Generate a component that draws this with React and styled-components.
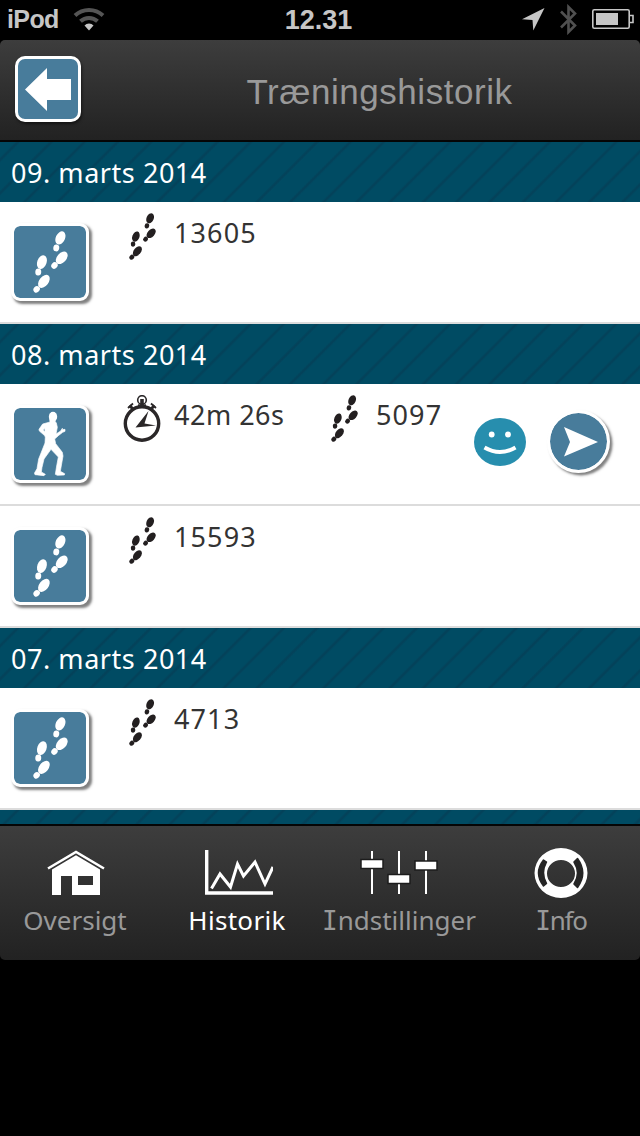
import React from 'react';
import styled, { createGlobalStyle } from 'styled-components';

const GlobalStyle = createGlobalStyle`
  * { box-sizing: border-box; }
  body {
    margin: 0;
    background: #000;
    font-family: "Noto Sans", sans-serif;
  }
  svg { display: block; }
`

const days = [
  { date: '09. marts 2014', entries: [{ type: 'steps', steps: '13605' }] },
  { date: '08. marts 2014', entries: [
    { type: 'walk', time: '42m 26s', steps: '5097', sent: true },
    { type: 'steps', steps: '15593' },
  ] },
  { date: '07. marts 2014', entries: [{ type: 'steps', steps: '4713' }] },
  { date: '', entries: [] },
];

function Footprints({ width, height }) {
  return (
    <svg width={width} height={height} viewBox="100 64 106 187" preserveAspectRatio="none" fill="currentColor">
      <ellipse cx="183" cy="85" rx="14" ry="21" transform="rotate(24 183 85)" />
      <ellipse cx="170.500" cy="115" rx="9" ry="10.500" transform="rotate(8 171 115)" />
      <ellipse cx="187" cy="145" rx="14" ry="22" transform="rotate(42 187 145)" />
      <ellipse cx="165" cy="168" rx="9" ry="10.500" transform="rotate(42 165 168)" />
      <ellipse cx="127" cy="158" rx="14" ry="21.500" transform="rotate(20 127 158)" />
      <ellipse cx="116" cy="187.500" rx="9" ry="10.500" transform="rotate(5 116 187)" />
      <ellipse cx="133" cy="216" rx="14" ry="22.500" transform="rotate(38 133 216)" />
      <ellipse cx="111" cy="240" rx="9" ry="10.500" transform="rotate(42 111 240)" />
    </svg>
  );
}

function Walker() {
  return (
    <svg width="32" height="66" viewBox="104 94 96 198" fill="#fff">
      <ellipse cx="161" cy="111" rx="12.500" ry="15" />
      <path d="M151 119L152 127L130 133L119 149L120 154L135 167L138 172L137 190L118 238L113 267L105 281L107 285L134 288L138 284L126 277L128 263L134 238L155 209L177 232L172 259L168 284L174 287L195 286L196 282L183 275L191 229L189 218L169 192L166 178L177 168L190 158L197 155L197 149L190 150L189 146L184 154L170 163L174 143L171 130L166 123ZM136 146L137 157L131 151Z" stroke="#fff" strokeWidth="2" strokeLinejoin="round" />
    </svg>
  );
}

function Stopwatch() {
  return (
    <svg width="38" height="48" viewBox="0 0 38 48" fill="none" stroke="#2a2728">
      <circle cx="19" cy="28.500" r="16.700" strokeWidth="3.400" />
      <circle cx="19" cy="5" r="4.300" strokeWidth="1.600" />
      <path d="M19 4V13" strokeWidth="3.600" />
      <path d="M15 10.500H23" strokeWidth="2.400" />
      <path d="M6.500 10.500L11 15M31.500 10.500L27 15" strokeWidth="3" />
      <path d="M5 13L10 8.500M33 13L28 8.500" strokeWidth="1.800" />
      <path d="M12.500 32.500L25.500 16L21.500 28.500L33 30.500Z" fill="#2a2728" stroke="none" />
    </svg>
  );
}

function StatusBar() {
  return (
    <Status>
      <Carrier>
        iPod
        <svg width="32" height="24" viewBox="0 0 32 24" fill="none" stroke="#555" strokeWidth="4">
          <path d="M2 8.500A20.500 20.500 0 0 1 30 8.500" />
          <path d="M7.500 14.300A12.500 12.500 0 0 1 24.500 14.300" />
          <path d="M16 23.500L11.500 18.600A6 6 0 0 1 20.500 18.600Z" fill="#c6c6c6" stroke="none" />
        </svg>
      </Carrier>
      <Clock>12.31</Clock>
      <Indicators>
        <svg width="23" height="23" viewBox="0 0 23 23" fill="#c6c6c6"><path d="M22.500 0L11.300 22.500L10.500 12L0 11.200Z" /></svg>
        <svg width="17" height="31" viewBox="0 0 17 31" fill="none" stroke="#505050" strokeWidth="2.600"><path d="M1 7.500L15 21.500L8.500 28V3L15 9.500L1 23.500" /></svg>
        <svg width="42" height="20" viewBox="0 0 42 20" fill="none" stroke="#c6c6c6" strokeWidth="1.600">
          <rect x="0.800" y="0.800" width="36.400" height="18.400" rx="1.500" />
          <rect x="4" y="4" width="22" height="12" fill="#c6c6c6" stroke="none" />
          <path d="M37.500 6.500H41V13.500H37.500" />
        </svg>
      </Indicators>
    </Status>
  );
}

function Entry({ entry }) {
  return (
    <Row>
      <Tile>{entry.type === 'walk' ? <Walker /> : <Footprints width={35} height={62} />}</Tile>
      <Metrics>
        {entry.time && (
          <Metric>
            <MetricIcon><Stopwatch /></MetricIcon>
            <Value $spacing={0.5}>{entry.time}</Value>
          </Metric>
        )}
        <Metric>
          <MetricIcon><Footprints width={27} height={47} /></MetricIcon>
          <Value $spacing={1.1}>{entry.steps}</Value>
        </Metric>
      </Metrics>
      {entry.sent && (
        <Actions>
          <svg width="52" height="48" viewBox="0 0 52 48">
            <ellipse cx="26" cy="24" rx="26" ry="24" fill="#278eae" />
            <circle cx="17.700" cy="16.500" r="2.900" fill="#fff" />
            <circle cx="34" cy="16.500" r="2.900" fill="#fff" />
            <path d="M10.500 29.500Q26 38.500 41.500 29.500" fill="none" stroke="#fff" strokeWidth="4" />
          </svg>
          <SendButton>
            <svg width="34" height="30" viewBox="0 0 34 30" fill="#fff"><path d="M0 0L34 15L0 29.500L6 15Z" /></svg>
          </SendButton>
        </Actions>
      )}
    </Row>
  );
}

export default function App() {
  return (
    <Phone>
      <GlobalStyle />
      <StatusBar />
      <Screen>
        <Header>
          <BackButton>
            <svg width="46" height="43" viewBox="0 0 46 43" fill="#fff"><path d="M0 21.500L22 0V11H46V32H22V43Z" /></svg>
          </BackButton>
          <Title>Træningshistorik</Title>
        </Header>
        <List>
          {days.map((day) => (
            <React.Fragment key={day.date}>
              <DayHeading>{day.date}</DayHeading>
              {day.entries.map((entry, i) => <Entry key={i} entry={entry} />)}
            </React.Fragment>
          ))}
        </List>
        <TabBar>
          <Tab>
            <TabIcon $shift={1}>
              <svg width="58" height="46" viewBox="0 0 58 46">
                <path d="M1 18.500L29 2L57 18.500" fill="none" stroke="#fff" strokeWidth="2.600" />
                <path d="M5 19.500L29 5.200L53 19.500V45H25V26H14V45H5ZM31 26V35H46V26Z" fill="#fff" fillRule="evenodd" />
              </svg>
            </TabIcon>
            <TabLabel>Oversigt</TabLabel>
          </Tab>
          <Tab $active>
            <TabIcon $shift={1.5}>
              <svg width="68" height="46" viewBox="0 0 68 46" fill="none" stroke="#fff">
                <path d="M1.700 0V43H68" strokeWidth="3.400" />
                <path d="M6.500 38.500L15 24L25.500 37L32.500 14L38.500 26L50 12L60 34L68 17" strokeWidth="3" />
              </svg>
            </TabIcon>
            <TabLabel $spacing={0.3}>Historik</TabLabel>
          </Tab>
          <Tab>
            <TabIcon>
              <svg width="78" height="46" viewBox="0 0 78 46" fill="#fff">
                <path d="M11 1h2v43h-2zM38 1h2v43h-2zM65 1h2v43h-2z" />
                <g stroke="#1c1c1c" strokeWidth="1.500">
                  <rect x="1" y="9.500" width="22" height="9" />
                  <rect x="28" y="24.500" width="22" height="9" />
                  <rect x="55" y="11" width="22" height="9" />
                </g>
              </svg>
            </TabIcon>
            <TabLabel $serif>Indstillinger</TabLabel>
          </Tab>
          <Tab>
            <TabIcon>
              <svg width="54" height="50" viewBox="0 0 54 50">
                <path d="M27 0A26.500 25 0 1 0 27 50A26.500 25 0 1 0 27 0ZM27 12A14 13.500 0 1 1 27 39A14 13.500 0 1 1 27 12Z" fill="#fff" fillRule="evenodd" />
                <path d="M9.500 12Q-0.500 25 9.500 38L12.500 35.500Q6.500 25 12.500 14Z" fill="#262626" stroke="#262626" strokeWidth="1.500" strokeLinejoin="round" />
                <path d="M43.500 10.500Q54 25 43.500 39.500L40 36Q47 25 40 14Z" fill="#262626" stroke="#262626" strokeWidth="1.500" strokeLinejoin="round" />
              </svg>
            </TabIcon>
            <TabLabel $serif $spacing={-1.2}>Info</TabLabel>
          </Tab>
        </TabBar>
      </Screen>
    </Phone>
  );
}

const Phone = styled.div`
  width: 640px;
  height: 1136px;
  background: #000;
  overflow: hidden;
`

const Status = styled.div`
  display: grid;
  grid-template-columns: 250px 137px 1fr;
  align-items: center;
  height: 40px;
  color: #c6c6c6;
  font-family: "Liberation Sans", Arial, sans-serif;
  font-weight: bold;
`

const Carrier = styled.div`
  display: flex;
  align-items: center;
  gap: 14px;
  padding: 0 0 2px 7px;
  font-size: 25px;
  letter-spacing: -0.6px;
`

const Clock = styled.div`
  text-align: center;
  font-size: 27px;
`

const Indicators = styled.div`
  display: flex;
  align-items: center;
  justify-content: flex-end;
  gap: 15px;
  padding: 0 6px 2px 0;
`

const Screen = styled.div`
  display: flex;
  flex-direction: column;
  height: 920px;
  border-radius: 5px;
  overflow: hidden;
`

const Header = styled.header`
  display: flex;
  align-items: center;
  flex: none;
  height: 102px;
  padding-left: 15px;
  background: linear-gradient(#3d3d3d, #222);
  border-bottom: 2px solid #050505;
`

const BackButton = styled.button`
  display: flex;
  align-items: center;
  justify-content: center;
  width: 66px;
  height: 66px;
  margin-top: -2px;
  padding: 0;
  border: 3px solid #fff;
  border-radius: 10px;
  background: #487c9b;
  box-shadow: 1px 2px 3px rgba(0, 0, 0, 0.5);
`

const Title = styled.h1`
  flex: 1;
  margin: 3px 0 0 38px;
  color: #999;
  font-family: "Liberation Sans", Arial, sans-serif;
  font-size: 35px;
  font-weight: normal;
  letter-spacing: 0.55px;
  text-align: center;
`

const List = styled.main`
  height: 682px;
  overflow: hidden;
  background: #fff;
`

const DayHeading = styled.h2`
  height: 60px;
  margin: 0;
  padding-left: 11px;
  background: repeating-linear-gradient(
    135deg,
    #004b63 0,
    #004b63 10.5px,
    #04425a 12.3px,
    #04425a 13.1px,
    #004b63 14.9px,
    #004b63 23.5px
  );
  color: #fff;
  font-size: 27px;
  font-weight: normal;
  line-height: 62px;
  letter-spacing: 0.55px;
`

const Row = styled.div`
  display: flex;
  height: 122px;
  padding-left: 11px;
  border-bottom: 2px solid #dcdcdc;
`

const Tile = styled.div`
  display: flex;
  align-items: center;
  justify-content: center;
  width: 78px;
  height: 78px;
  margin-top: 21px;
  border: 3px solid #fff;
  border-radius: 9px;
  background: #487c9b;
  background-clip: padding-box;
  box-shadow: 2.5px 2.5px 2.5px rgba(0, 0, 0, 0.5);
  color: #fff;
`

const Metrics = styled.div`
  display: flex;
  padding: 11px 0 0 34px;
`

const Metric = styled.div`
  display: flex;
  align-items: flex-start;
  width: 202px;
  gap: 13px;
`

const MetricIcon = styled.div`
  display: flex;
  justify-content: center;
  width: 38px;
  color: #231f20;
`

const Value = styled.span`
  color: #333;
  font-size: 27px;
  line-height: 39px;
  letter-spacing: ${(p) => p.$spacing}px;
  white-space: nowrap;
`

const Actions = styled.div`
  display: flex;
  align-items: flex-start;
  gap: 21px;
  margin-left: -53px;
  padding-top: 26px;

  svg { flex: none; }
  > svg { margin-top: 8px; }
`

const SendButton = styled.button`
  display: flex;
  align-items: center;
  justify-content: center;
  flex: none;
  width: 63px;
  height: 63px;
  padding: 0 0 0 4px;
  border: 3px solid #fff;
  border-radius: 50%;
  background: #487c9b;
  background-clip: padding-box;
  box-shadow: 2.5px 2.5px 2.5px rgba(0, 0, 0, 0.5);
`

const TabBar = styled.nav`
  display: flex;
  flex: none;
  height: 136px;
  padding-top: 20px;
  border-top: 2px solid #050505;
  background: linear-gradient(#3d3d3d, #222);
`

const Tab = styled.div`
  display: flex;
  flex-direction: column;
  align-items: center;
  flex: none;
  width: 162px;
  color: ${(p) => (p.$active ? '#fff' : '#999')};

  &:first-child { margin-left: -6px; }
`

const TabIcon = styled.div`
  display: flex;
  align-items: center;
  height: 54px;
  padding-left: ${(p) => (p.$shift || 0) * 2}px;
`

const TabLabel = styled.span`
  display: block;
  font-size: 26px;
  line-height: 40px;
  letter-spacing: ${(p) => p.$spacing || 0}px;
  white-space: nowrap;

  &::first-letter {
    ${(p) => p.$serif && 'font-family: "DejaVu Sans Mono", monospace;'}
  }
`
